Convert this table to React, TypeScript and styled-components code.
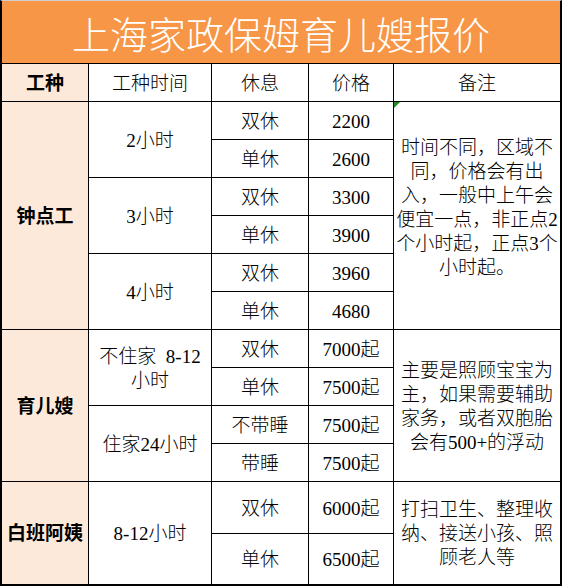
import React from "react";
import styled, { createGlobalStyle } from "styled-components";

const GlobalStyle = createGlobalStyle`
  html, body {
    margin: 0;
    padding: 0;
    background: #ffffff;
  }
  body {
    font-family: "Liberation Serif", "Noto Sans CJK SC", serif;
    color: #000000;
  }
`;

type Group = {
  name: string;
  times: { label: string[]; span: number }[];
  rests: string[];
  prices: string[];
  note: string[];
  noteLift?: boolean;
};

const groups: Group[] = [
  {
    name: "钟点工",
    times: [
      { label: ["2小时"], span: 2 },
      { label: ["3小时"], span: 2 },
      { label: ["4小时"], span: 2 },
    ],
    rests: ["双休", "单休", "双休", "单休", "双休", "单休"],
    prices: ["2200", "2600", "3300", "3900", "3960", "4680"],
    note: [
      "时间不同，区域不",
      "同，价格会有出",
      "入，一般中上午会",
      "便宜一点，非正点2",
      "个小时起，正点3个",
      "小时起。",
    ],
    noteLift: true,
  },
  {
    name: "育儿嫂",
    times: [
      { label: ["不住家\u00a0\u00a08-12", "小时"], span: 2 },
      { label: ["住家24小时"], span: 2 },
    ],
    rests: ["双休", "单休", "不带睡", "带睡"],
    prices: ["7000起", "7500起", "7500起", "7500起"],
    note: [
      "主要是照顾宝宝为",
      "主，如果需要辅助",
      "家务，或者双胞胎",
      "会有500+的浮动",
    ],
  },
  {
    name: "白班阿姨",
    times: [{ label: ["8-12小时"], span: 2 }],
    rests: ["双休", "单休"],
    prices: ["6000起", "6500起"],
    note: ["打扫卫生、整理收", "纳、接送小孩、照", "顾老人等"],
  },
];

const Sheet = styled.div`
  box-sizing: border-box;
  width: 562px;
  border-top: 1px solid #cfcfcf;
  border-left: 2px solid #000;
  border-right: 2px solid #000;
  border-bottom: 2px solid #000;
  background: #000;
`;

const Title = styled.div`
  height: 62px;
  margin-bottom: 1px;
  background: #f79646;
  color: #ffffff;
  font-size: 38px;
  font-weight: 300;
  display: flex;
  align-items: center;
  justify-content: center;
`;

const Grid = styled.div`
  display: grid;
  grid-template-columns: 86px 122px 96px 84px 166px;
  grid-template-rows: 37px repeat(10, 37px) 51px 50px;
  gap: 1px;
  background: #000;
`;

const Cell = styled.div<{
  $col: number;
  $row: number;
  $span?: number;
  $kind?: "type" | "plain";
  $lift?: boolean;
}>`
  position: relative;
  grid-column: ${(p) => p.$col};
  grid-row: ${(p) => p.$row} / span ${(p) => p.$span ?? 1};
  background: ${(p) => (p.$kind === "type" ? "#fde9d9" : "#ffffff")};
  font-weight: ${(p) => (p.$kind === "type" ? 700 : 300)};
  font-size: 19px;
  line-height: 24px;
  display: flex;
  flex-direction: column;
  align-items: center;
  justify-content: center;
  text-align: center;
  white-space: nowrap;
  padding-bottom: ${(p) => (p.$lift ? "18px" : "0")};
  padding-top: 2px;
  box-sizing: border-box;
`;

const Line = styled.span`
  display: block;
`;

const Marker = styled.span`
  position: absolute;
  left: 0;
  top: 0;
  width: 0;
  height: 0;
  border-top: 6px solid #1e8c1e;
  border-right: 6px solid transparent;
`;

export default function App() {
  const cells: React.ReactNode[] = [];
  let row = 2;
  groups.forEach((g, gi) => {
    const rows = g.rests.length;
    cells.push(
      <Cell key={`n${gi}`} $col={1} $row={row} $span={rows} $kind="type">
        {g.name}
      </Cell>
    );
    let tr = row;
    g.times.forEach((t, ti) => {
      cells.push(
        <Cell key={`t${gi}-${ti}`} $col={2} $row={tr} $span={t.span}>
          {t.label.map((l) => (
            <Line key={l}>{l}</Line>
          ))}
        </Cell>
      );
      tr += t.span;
    });
    g.rests.forEach((r, ri) => {
      cells.push(
        <Cell key={`r${gi}-${ri}`} $col={3} $row={row + ri}>
          {r}
        </Cell>
      );
      cells.push(
        <Cell key={`p${gi}-${ri}`} $col={4} $row={row + ri}>
          {g.prices[ri]}
        </Cell>
      );
    });
    cells.push(
      <Cell key={`m${gi}`} $col={5} $row={row} $span={rows} $lift={g.noteLift}>
        {gi === 0 && <Marker />}
        {g.note.map((l) => (
          <Line key={l}>{l}</Line>
        ))}
      </Cell>
    );
    row += rows;
  });

  return (
    <>
      <GlobalStyle />
      <Sheet>
        <Title>上海家政保姆育儿嫂报价</Title>
        <Grid>
          <Cell $col={1} $row={1} $kind="type">工种</Cell>
          <Cell $col={2} $row={1}>工种时间</Cell>
          <Cell $col={3} $row={1}>休息</Cell>
          <Cell $col={4} $row={1}>价格</Cell>
          <Cell $col={5} $row={1}>备注</Cell>
          {cells}
        </Grid>
      </Sheet>
    </>
  );
}
